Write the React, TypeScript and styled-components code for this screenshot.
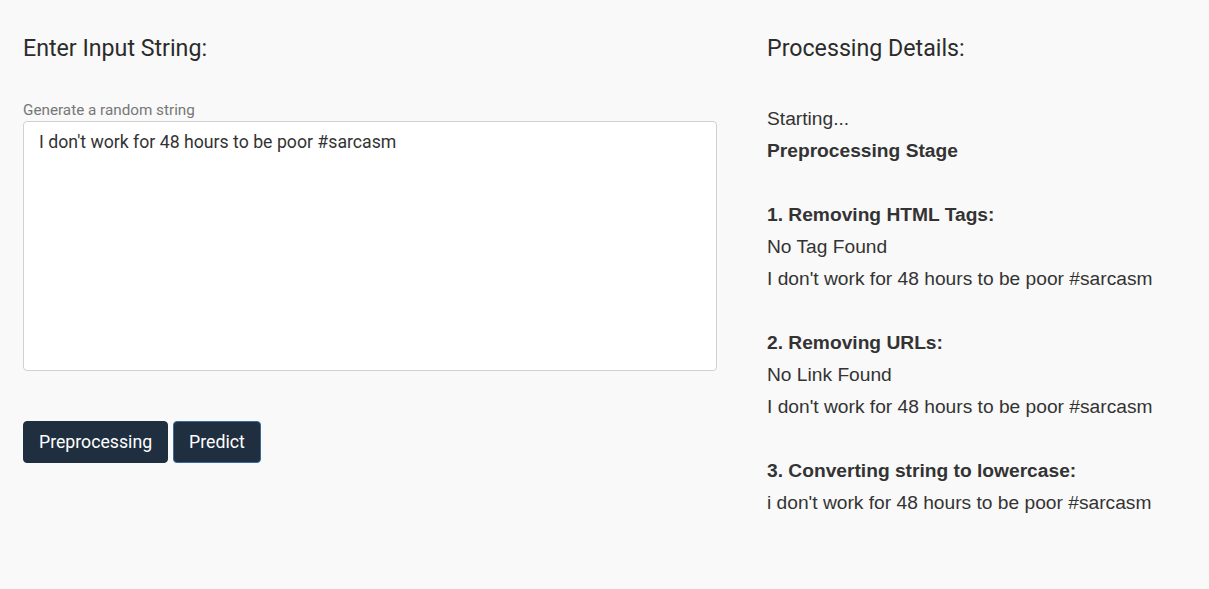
import React from "react";
import styled, { createGlobalStyle } from "styled-components";

const Global = createGlobalStyle`
  html, body { margin: 0; padding: 0; background: #f9f9f9; }
  body { font-family: Roboto, "Liberation Sans", sans-serif; color: #333; }
`;

const Page = styled.div`
  display: grid;
  grid-template-columns: 694px 1fr;
  column-gap: 50px;
  padding: 33px 23px 0 23px;
  min-height: 589px;
  box-sizing: border-box;
`;

const Column = styled.div`
  display: flex;
  flex-direction: column;
`;

const Heading = styled.h2`
  margin: 0;
  font-family: Roboto, sans-serif;
  font-weight: 400;
  font-size: 23.2px;
  line-height: 30px;
  color: #2b2b2b;
`;

const Label = styled.label`
  margin-top: 38px;
  font-family: Roboto, sans-serif;
  font-size: 15.25px;
  line-height: 18px;
  color: #777;
`;

const TextArea = styled.textarea`
  margin-top: 2px;
  height: 250px;
  box-sizing: border-box;
  resize: none;
  background: #fff;
  border: 1px solid #d0d0d0;
  border-radius: 4px;
  padding: 9px 15px;
  font-family: Roboto, sans-serif;
  font-size: 17.7px;
  line-height: 22px;
  color: #333;
  outline: none;
`;

const Actions = styled.div`
  display: flex;
  gap: 5px;
  margin-top: 50px;
`;

const Button = styled.button<{ $focused?: boolean }>`
  height: 42px;
  padding: 0 15px;
  background: #1f2f40;
  color: #fff;
  border: 1px solid ${(p) => (p.$focused ? "#3a6a9a" : "#1f2f40")};
  border-radius: 4px;
  font-family: Roboto, sans-serif;
  font-weight: 400;
  font-size: 17.7px;
  cursor: pointer;
`;

const Details = styled.div`
  margin-top: 40px;
  font-family: "Liberation Sans", Arial, sans-serif;
  font-size: 19.2px;
  line-height: 32px;
  color: #333;
`;

const Line = styled.div<{ $bold?: boolean }>`
  font-weight: ${(p) => (p.$bold ? 700 : 400)};
  min-height: 32px;
`;

const text = "I don't work for 48 hours to be poor #sarcasm";

export default function App() {
  return (
    <>
      <Global />
      <Page>
        <Column>
          <Heading>Enter Input String:</Heading>
          <Label>Generate a random string</Label>
          <TextArea defaultValue={text} />
          <Actions>
            <Button>Preprocessing</Button>
            <Button $focused>Predict</Button>
          </Actions>
        </Column>
        <Column>
          <Heading>Processing Details:</Heading>
          <Details>
            <Line>Starting...</Line>
            <Line $bold>Preprocessing Stage</Line>
            <Line />
            <Line $bold>1. Removing HTML Tags:</Line>
            <Line>No Tag Found</Line>
            <Line>{text}</Line>
            <Line />
            <Line $bold>2. Removing URLs:</Line>
            <Line>No Link Found</Line>
            <Line>{text}</Line>
            <Line />
            <Line $bold>3. Converting string to lowercase:</Line>
            <Line>{text.toLowerCase()}</Line>
          </Details>
        </Column>
      </Page>
    </>
  );
}
